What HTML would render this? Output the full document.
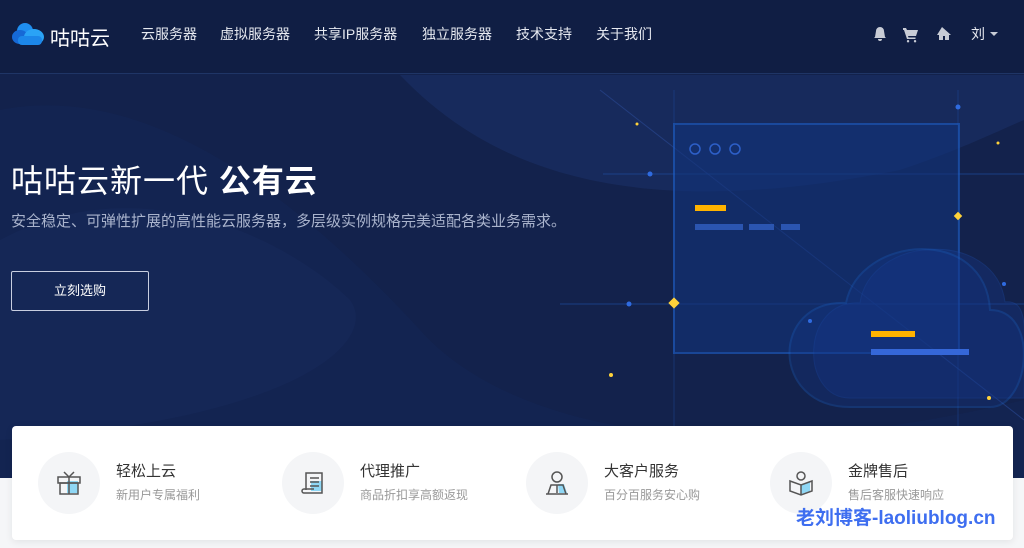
<!DOCTYPE html>
<html><head><meta charset="utf-8"><style>
*{margin:0;padding:0;box-sizing:border-box}
body{width:1024px;height:548px;overflow:hidden;font-family:"Liberation Sans","Noto Sans CJK SC",sans-serif;background:#f5f6f8;position:relative}
.hero{position:absolute;left:0;top:0;width:1024px;height:478px;background:#13224c;overflow:hidden}
.hdr{position:absolute;left:0;top:0;width:1024px;height:74px;border-bottom:1px solid #1f3566;background:#101e44;z-index:2}
.nav a{position:absolute;top:24px;color:#e6e9f0;font-size:14px}
.h1{position:absolute;left:11px;top:156px;color:#fff;font-size:32px;letter-spacing:1px}
.sub{position:absolute;left:11px;top:210px;color:#a9b3cc;font-size:15px}
.btn{position:absolute;left:11px;top:271px;width:138px;height:40px;border:1px solid #c8cee0;border-radius:2px;color:#fff;font-size:13px;text-align:center;line-height:38px}
.card{position:absolute;left:12px;top:426px;width:1001px;height:114px;background:#fff;border-radius:4px;box-shadow:0 2px 8px rgba(0,0,0,.08)}
.it{position:absolute;top:26px}
.ci{position:absolute;left:0;top:0;width:62px;height:62px;border-radius:50%;background:#f4f5f7}
.t{position:absolute;left:78px;top:8px;font-size:15px;color:#333;white-space:nowrap}
.s{position:absolute;left:78px;top:34px;font-size:12px;color:#999;white-space:nowrap}
.wm{position:absolute;left:796px;top:503px;font-size:19px;font-weight:bold;color:#3e6ef0;white-space:nowrap}
</style></head><body>
<div class="hero">
<svg width="1024" height="478" style="position:absolute;left:0;top:0">
<path d="M0 110 C150 80 300 200 420 330 C500 420 700 478 1024 400 L1024 478 L0 478Z" fill="#142554" opacity=".7"/>
<path d="M400 75 C500 180 650 220 900 170 C960 150 1000 130 1024 120 L1024 75Z" fill="#1a3068" opacity=".6"/>
<path d="M0 240 C150 160 300 250 350 300 C380 340 300 420 0 440Z" fill="#172a5c" opacity=".5"/>
<line x1="600" y1="90" x2="1024" y2="420" stroke="#2a4a96" stroke-width="1" opacity=".6"/>
<line x1="603" y1="174" x2="1024" y2="174" stroke="#1f4fa8" opacity=".6"/>
<line x1="560" y1="304" x2="1024" y2="304" stroke="#1f4fa8" opacity=".6"/>
<line x1="674" y1="90" x2="674" y2="478" stroke="#1f4fa8" opacity=".4"/>
<line x1="958" y1="90" x2="958" y2="478" stroke="#1f4fa8" opacity=".4"/>
<rect x="674" y="124" width="285" height="229" fill="#12337a" opacity=".6" stroke="#1d5ec8" stroke-width="2"/>
<circle cx="695" cy="149" r="5" fill="none" stroke="#2d5fc8" stroke-width="1.5"/>
<circle cx="715" cy="149" r="5" fill="none" stroke="#2d5fc8" stroke-width="1.5"/>
<circle cx="735" cy="149" r="5" fill="none" stroke="#2d5fc8" stroke-width="1.5"/>
<rect x="695" y="205" width="31" height="6" fill="#ffb300"/>
<rect x="695" y="224" width="48" height="6" fill="#2b55b0"/>
<rect x="749" y="224" width="25" height="6" fill="#2b55b0"/>
<rect x="781" y="224" width="19" height="6" fill="#2b55b0"/>
<path d="M850 398 C800 398 800 300 860 303 C870 235 995 228 1005 302 C1030 300 1024 330 1024 398Z" fill="#16388a" opacity=".35" stroke="#1d4fb0" stroke-width="1"/>
<path d="M850 407 C770 407 770 300 846 303 C860 235 985 225 990 310 C1040 310 1030 407 990 407Z" fill="#133688" opacity=".3" stroke="#1a62c8" stroke-width="2"/>
<rect x="871" y="331" width="44" height="6" fill="#ffb300"/>
<rect x="871" y="349" width="98" height="6" fill="#3567d8"/>
<g fill="#ffd23a"><rect x="670" y="299" width="8" height="8" transform="rotate(45 674 303)"/><rect x="955" y="213" width="6" height="6" transform="rotate(45 958 216)"/><circle cx="637" cy="124" r="1.5"/><circle cx="998" cy="143" r="1.5"/><circle cx="611" cy="375" r="2"/><circle cx="989" cy="398" r="2"/></g>
<g fill="#2f6be0"><circle cx="650" cy="174" r="2.5"/><circle cx="629" cy="304" r="2.5"/><circle cx="958" cy="107" r="2.5"/><circle cx="1004" cy="284" r="2"/><circle cx="810" cy="321" r="2"/></g>
</svg>
<div class="h1">咕咕云新一代 <b>公有云</b></div>
<div class="sub">安全稳定、可弹性扩展的高性能云服务器，多层级实例规格完美适配各类业务需求。</div>
<div class="btn">立刻选购</div>
</div>
<div class="hdr">
<svg width="32" height="24" style="position:absolute;left:12px;top:22px" viewBox="0 0 32 24"><circle cx="13" cy="9" r="8" fill="#1f8ef0"/><ellipse cx="8" cy="15" rx="8" ry="7" fill="#1669d6"/><ellipse cx="22" cy="15" rx="10" ry="8" fill="#2aa3f6"/><rect x="6" y="14" width="24" height="9" rx="4" fill="#1c87ea"/></svg>
<div style="position:absolute;left:50px;top:22px;color:#fff;font-size:20px">咕咕云</div>
<div class="nav"><a style="left:141px">云服务器</a><a style="left:220px">虚拟服务器</a><a style="left:314px">共享IP服务器</a><a style="left:422px">独立服务器</a><a style="left:516px">技术支持</a><a style="left:596px">关于我们</a></div>
<svg width="130" height="20" style="position:absolute;left:870px;top:24px" fill="#c8ccd6"><path d="M5 13 L6 7 A4 4 0 0 1 14 7 L15 13 L16 14 L4 14Z M8 15 h4 a2 2 0 0 1 -4 0Z"/><path d="M33 4 h3 l1 2 h11 l-2 6 h-8 l.5 1.5 h7 v1.5 h-8.5 l-3 -9 h-1Z M38 16 a1.2 1.2 0 1 0 .1 0Z M45 16 a1.2 1.2 0 1 0 .1 0Z"/><path d="M72 3 L81 11 h-2 v5 h-4 v-4 h-2 v4 h-4 v-5 h-2Z"/><path d="M120 8 h8 l-4 4Z"/></svg>
<div style="position:absolute;left:971px;top:24px;color:#e6e9f0;font-size:14px">刘</div>
</div>
<div class="card">
<div class="it" style="left:26px"><div class="ci"></div><svg style="position:absolute;left:16px;top:16px" width="30" height="30" fill="none" stroke="#555" stroke-width="1.5"><rect x="13" y="13" width="11" height="12" fill="#8fd7f5" stroke="none"/><rect x="4" y="9" width="22" height="6"/><rect x="6" y="15" width="18" height="11"/><path d="M15 9v17M10 4l5 5 5-5"/></svg><div class="t">轻松上云</div><div class="s">新用户专属福利</div></div>
<div class="it" style="left:270px"><div class="ci"></div><svg style="position:absolute;left:16px;top:16px" width="30" height="30" fill="none" stroke="#555" stroke-width="1.5"><rect x="13" y="13" width="11" height="10" fill="#8fd7f5" stroke="none"/><path d="M8 22V5h16v20H6a2 2 0 0 1 0-4h10"/><path d="M12 10h9M12 14h9M12 18h9"/></svg><div class="t">代理推广</div><div class="s">商品折扣享高额返现</div></div>
<div class="it" style="left:514px"><div class="ci"></div><svg style="position:absolute;left:16px;top:16px" width="30" height="30" fill="none" stroke="#555" stroke-width="1.5"><path d="M16 16l6 0 3 9h-8Z" fill="#8fd7f5" stroke="none"/><circle cx="15" cy="9" r="5"/><path d="M4 26h22M6 26l3-9h12l3 9M15 17v8"/></svg><div class="t">大客户服务</div><div class="s">百分百服务安心购</div></div>
<div class="it" style="left:758px"><div class="ci"></div><svg style="position:absolute;left:16px;top:16px" width="30" height="30" fill="none" stroke="#555" stroke-width="1.5"><path d="M15 17l9-3v9l-9 3Z" fill="#8fd7f5" stroke="none"/><circle cx="15" cy="8" r="4"/><path d="M4 13l11 4 11-4v10l-11 4-11-4Z M15 17v10"/></svg><div class="t">金牌售后</div><div class="s">售后客服快速响应</div></div>
</div>
<div class="wm">老刘博客-laoliublog.cn</div>
</body></html>
